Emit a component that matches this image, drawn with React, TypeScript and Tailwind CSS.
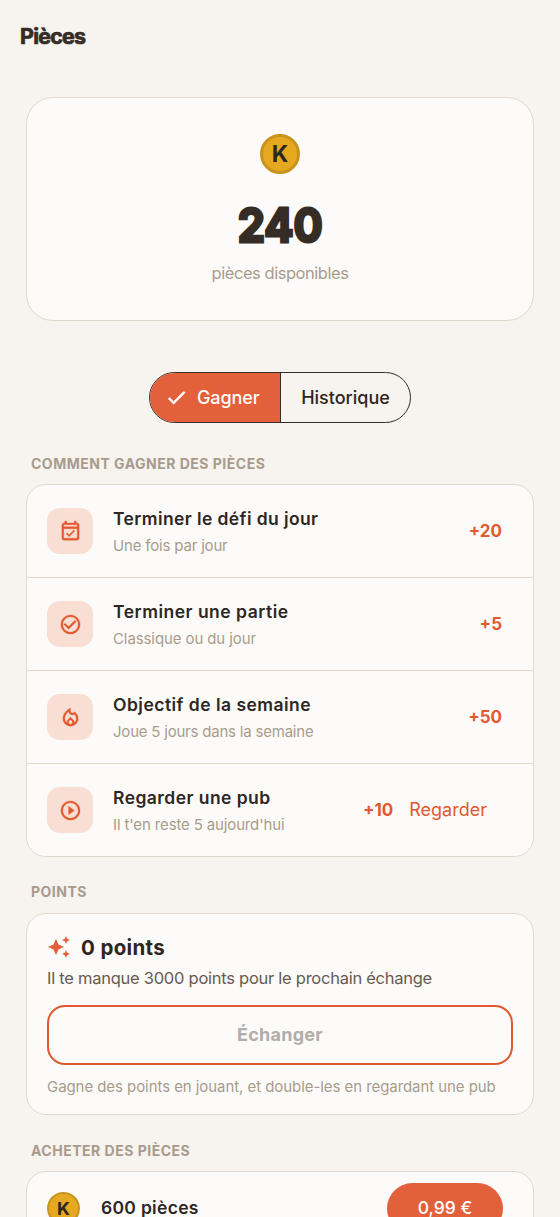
import type { ReactNode } from "react";
import { clsx } from "clsx";
import type { IconType } from "react-icons";
import {
  MdAutoAwesome,
  MdCheck,
  MdCheckCircleOutline,
  MdOutlineEventAvailable,
  MdOutlineLocalFireDepartment,
  MdPlayCircleOutline,
} from "react-icons/md";

interface Reward {
  icon: IconType;
  title: string;
  titleClass: string;
  subtitle: string;
  subtitleClass: string;
  amount: string;
  action?: string;
}

const rewards: Reward[] = [
  {
    icon: MdOutlineEventAvailable,
    title: "Terminer le défi du jour",
    titleClass: "tracking-[0.4px]",
    subtitle: "Une fois par jour",
    subtitleClass: "tracking-[-0.18px]",
    amount: "+20",
  },
  {
    icon: MdCheckCircleOutline,
    title: "Terminer une partie",
    titleClass: "tracking-[0.5px]",
    subtitle: "Classique ou du jour",
    subtitleClass: "tracking-[-0.1px]",
    amount: "+5",
  },
  {
    icon: MdOutlineLocalFireDepartment,
    title: "Objectif de la semaine",
    titleClass: "tracking-[0.48px]",
    subtitle: "Joue 5 jours dans la semaine",
    subtitleClass: "tracking-[-0.21px]",
    amount: "+50",
  },
  {
    icon: MdPlayCircleOutline,
    title: "Regarder une pub",
    titleClass: "tracking-[0.45px]",
    subtitle: "Il t'en reste 5 aujourd'hui",
    subtitleClass: "tracking-[-0.14px]",
    amount: "+10",
    action: "Regarder",
  },
];

function Coin({ className }: { className: string }) {
  return (
    <span
      className={clsx(
        "flex shrink-0 items-center justify-center rounded-full border-[#c8941e] bg-[#e6a81f] font-bold text-[#2d2621]",
        className,
      )}
    >
      K
    </span>
  );
}

function SectionLabel({ children, className }: { children: ReactNode; className?: string }) {
  return (
    <h2
      className={clsx(
        "ml-[5px] text-[14px] leading-5 font-bold tracking-[0.5px] whitespace-nowrap text-[#a89b8c]",
        className,
      )}
    >
      {children}
    </h2>
  );
}

function Card({ children, className }: { children: ReactNode; className?: string }) {
  return (
    <div className={clsx("border border-[#e0d8cc] bg-[#fdfbf9]", className)}>{children}</div>
  );
}

function RewardRow({ reward }: { reward: Reward }) {
  const Icon = reward.icon;
  return (
    <li className="flex h-[93px] items-center border-b border-[#e0d8cc] pr-[31px] pl-5 last:h-[92px] last:border-b-0">
      <span className="flex size-[46px] shrink-0 items-center justify-center rounded-[13px] bg-[#f8ded3]">
        <Icon className="size-[23px] stroke-none text-[#e2592f] [&>path:not([fill=none])]:stroke-current [&>path:not([fill=none])]:stroke-[0.3px]" />
      </span>
      <div className="ml-5 flex flex-1 flex-col gap-[3px] pt-[3px] whitespace-nowrap">
        <span className={clsx("text-[17.5px] leading-6 font-semibold text-[#2d2621]", reward.titleClass)}>
          {reward.title}
        </span>
        <span className={clsx("text-[15px] leading-6 text-[#a89b8c]", reward.subtitleClass)}>
          {reward.subtitle}
        </span>
      </div>
      <span className="pt-[2px] text-[17px] font-bold text-[#e2592f]">{reward.amount}</span>
      {reward.action && (
        <button className="mr-[15px] ml-4 text-[18px] leading-6 text-[#e2592f]">{reward.action}</button>
      )}
    </li>
  );
}

export default function App() {
  return (
    <div className="h-[1217px] w-[560px] overflow-hidden bg-[#f7f3ee] font-['Inter',sans-serif] text-[#2d2621]">
      <header className="flex h-[74px] items-center px-5">
        <h1 className="text-[21.5px] leading-none font-bold tracking-[-0.8px] text-[#352c26] [-webkit-text-stroke:0.7px_#352c26]">
          Pièces
        </h1>
      </header>

      <main className="px-[26px] pt-[23px]">
        <Card className="flex h-[224px] flex-col items-center rounded-[27px] pt-9">
          <Coin className="size-10 border-[3px] text-[23px]" />
          <span className="mt-[26px] scale-x-92 text-[47px] leading-[50px] font-bold text-[#352c26] [-webkit-text-stroke:3px_#352c26]">
            240
          </span>
          <span className="mt-[11px] text-[16.5px] leading-6 tracking-[-0.46px] text-[#a89b8c]">
            pièces disponibles
          </span>
        </Card>

        {/* Gagner / Historique */}
        <div className="mx-auto mt-[51px] flex h-[51px] w-[262px] overflow-hidden rounded-full border border-[#352c26] text-[18px] font-medium">
          <button className="flex w-[131px] items-center border-r border-[#352c26] bg-[#e2603a] pb-px pl-[15px] text-white">
            <MdCheck className="size-[23px] stroke-none [&>path:not([fill=none])]:stroke-white [&>path:not([fill=none])]:stroke-[0.6px]" />
            <span className="ml-[9px] tracking-[-0.1px]">Gagner</span>
          </button>
          <button className="flex flex-1 items-center justify-center pb-px">Historique</button>
        </div>

        <SectionLabel className="mt-[31px]">COMMENT GAGNER DES PIÈCES</SectionLabel>
        <Card className="mt-[10px] rounded-[20px]">
          <ul>
            {rewards.map((reward) => (
              <RewardRow key={reward.title} reward={reward} />
            ))}
          </ul>
        </Card>

        <SectionLabel className="mt-[25px]">POINTS</SectionLabel>
        <Card className="mt-[11px] h-[202px] rounded-[20px] px-5 pt-5 whitespace-nowrap">
          <div className="flex h-[26px] items-center gap-[10px]">
            <MdAutoAwesome className="size-[24px] text-[#e2603a]" />
            <span className="pt-[2px] text-[20.5px] font-bold tracking-[0.35px]">0 points</span>
          </div>
          <p className="mt-[6px] text-[16.5px] leading-6 tracking-[-0.26px] text-[#665a50]">
            Il te manque 3000 points pour le prochain échange
          </p>
          <button className="mt-[15px] flex h-[60px] w-[466px] items-center justify-center rounded-[18px] border-2 border-[#e2592f] pb-[2px] text-[18px] font-bold tracking-[0.25px] text-[#b0adaa]">
            Échanger
          </button>
          <p className="mt-[10px] text-[15px] leading-6 tracking-[-0.065px] text-[#a89b8c]">
            Gagne des points en jouant, et double-les en regardant une pub
          </p>
        </Card>

        <SectionLabel className="mt-[26px]">ACHETER DES PIÈCES</SectionLabel>
        <Card className="mt-[10px] h-[74px] rounded-[20px]">
          <div className="flex h-[72px] items-center pr-[30px] pl-5">
            <Coin className="size-[33px] border-2 text-[18px]" />
            <span className="ml-[21px] flex-1 text-[17.5px] font-semibold tracking-[0.3px]">600 pièces</span>
            <button className="h-[51px] w-[116px] rounded-full bg-[#e2603a] text-[17.5px] font-medium text-white">
              0,99 €
            </button>
          </div>
        </Card>
      </main>
    </div>
  );
}
